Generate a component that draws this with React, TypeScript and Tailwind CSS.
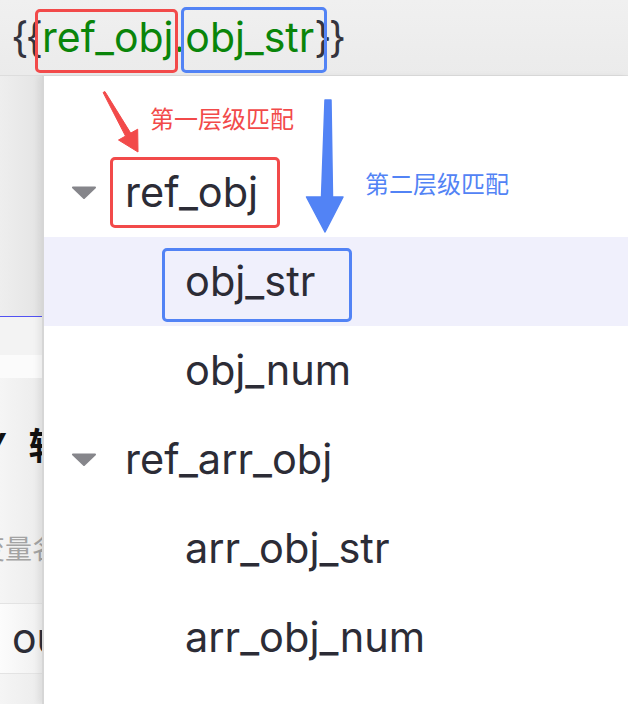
import React from 'react';

const Caret = () => (
  <svg width="26" height="13" viewBox="0 0 26 13" className="shrink-0">
    <path d="M2 1.5 L24 1.5 L13 12 Z" fill="#86868b" stroke="#86868b" strokeWidth="2" strokeLinejoin="round" />
  </svg>
);

const Box = ({ color, className }: { color: string; className: string }) => (
  <span className={`pointer-events-none absolute rounded-[5px] border-[3px] ${color} ${className}`} />
);

const App = () => {
  return (
    <div className="relative h-[704px] w-[628px] overflow-hidden bg-[#eeeeee] font-['Inter','Noto_Sans_CJK_SC',sans-serif] text-[#2c2c36]">
      {/* expression bar */}
      <header className="flex h-[76px] items-center border-b border-[#dddddd] bg-gradient-to-b from-[#f0f0f0] to-[#ebebeb] pl-[11px] text-[41px] leading-none">
        <span className="tracking-[-3px] text-[#34343e]">{'{{'}</span>
        <span className="relative ml-[2px] text-[#0a850a]">
          ref_obj
          <Box color="border-[#f24a4a]" className="-top-[8px] -bottom-[15px] -left-[7px] -right-[4px]" />
        </span>
        <span className="text-[#0a850a]">.</span>
        <span className="relative text-[#0a850a]">
          obj_str
          <Box color="border-[#5283f5]" className="-top-[10px] -bottom-[15px] -left-[4px] -right-[13px]" />
        </span>
        <span className="tracking-[-3px] text-[#34343e]">{'}}'}</span>
      </header>

      <div className="flex h-[628px]">
        {/* page behind the dropdown */}
        <aside className="flex w-[42px] shrink-0 flex-col overflow-hidden">
          <div className="h-[240px] bg-gradient-to-r from-[#eeeeee] to-[#e4e4e4]" />
          <div className="h-px bg-[#5252f2]" />
          <div className="h-[38px] bg-[#f3f3f3]" />
          <div className="h-[23px] bg-[#fbfbfb]" />
          <div className="flex h-[225px] flex-col bg-gradient-to-r from-[#f5f5f5] to-[#ececec] pt-[50px]">
            <div className="-ml-[16px] h-[40px] whitespace-nowrap font-['DejaVu_Sans_Mono','Noto_Sans_CJK_SC',monospace] text-[37px] font-bold leading-[40px] text-[#111111]">
              Y 轴
            </div>
            <div className="-ml-[22px] mt-[64px] whitespace-nowrap font-['Noto_Sans_CJK_SC',sans-serif] text-[27px] leading-[32px] text-[#a3a3a3]">
              变量名
            </div>
          </div>
          <div className="h-px bg-[#e3e3e3]" />
          <div className="flex h-[69px] items-center bg-gradient-to-r from-[#fcfcfc] to-[#f0f0f0] pl-[12px] text-[41px] leading-none text-[#2c2c36]">
            output
          </div>
          <div className="h-px bg-[#e3e3e3]" />
          <div className="flex-1 bg-gradient-to-r from-[#f5f5f5] to-[#ececec]" />
        </aside>

        {/* dropdown */}
        <section className="flex-1 border-l-2 border-[#d6d6d6] bg-white pt-[72px] text-[41.5px] leading-none shadow-[-4px_0_6px_rgba(0,0,0,0.06)]">
          <div className="flex h-[89px] items-center gap-[28px] pl-[27px]">
            <Caret />
            <span className="relative">
              ref_obj
              <Box color="border-[#f24a4a]" className="-top-[15px] -bottom-[15px] -left-[15px] -right-[22px]" />
            </span>
          </div>
          <div className="flex h-[89px] items-center bg-[#f0f0fc] pl-[141px]">
            <span className="relative">
              obj_str
              <Box color="border-[#5283f5]" className="-top-[13px] -bottom-[20px] -left-[23px] -right-[37px]" />
            </span>
          </div>
          <div className="flex h-[89px] items-center pl-[141px]">obj_num</div>
          <div className="flex h-[89px] items-center gap-[28px] pl-[27px]">
            <Caret />
            <span>ref_arr_obj</span>
          </div>
          <div className="flex h-[89px] items-center pl-[141px]">arr_obj_str</div>
          <div className="flex h-[89px] items-center pl-[141px]">arr_obj_num</div>
        </section>
      </div>

      {/* annotations */}
      <svg className="pointer-events-none absolute left-0 top-0" width="628" height="704" viewBox="0 0 628 704">
        <polygon
          points="103.1,92.5 125.5,136.1 118.5,140 138,152 137.7,129.2 130.7,133.1 104.9,91.5"
          fill="#f24a4a"
          stroke="#f24a4a"
          strokeWidth="1"
          strokeLinejoin="round"
        />
        <polygon
          points="325,100 331,100 332.5,197 343,197 325,232 306.5,197 321.5,197"
          fill="#5283f5"
          stroke="#5283f5"
          strokeWidth="1.5"
          strokeLinejoin="round"
        />
      </svg>
      <span className="absolute left-[150px] top-[106px] font-['Noto_Sans_CJK_SC',sans-serif] text-[24px] leading-none text-[#f24a4a]">
        第一层级匹配
      </span>
      <span className="absolute left-[365px] top-[171px] font-['Noto_Sans_CJK_SC',sans-serif] text-[24px] leading-none text-[#5283f5]">
        第二层级匹配
      </span>
    </div>
  );
};

export default App;
